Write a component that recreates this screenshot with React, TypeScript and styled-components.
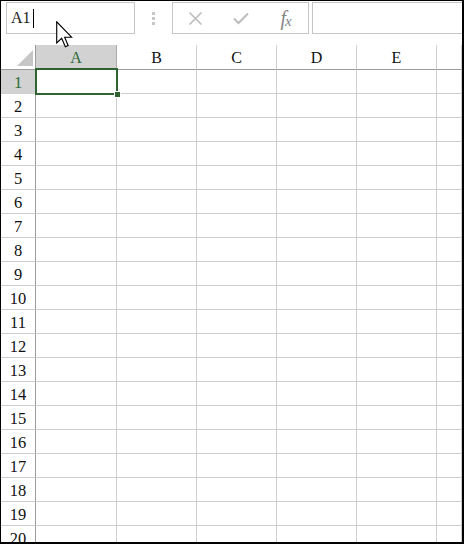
import React from "react";
import styled, { createGlobalStyle } from "styled-components";

const Global = createGlobalStyle`
  html, body { margin: 0; padding: 0; background: #ffffff; }
  body { font-family: "Liberation Serif", "Times New Roman", serif; }
`;

const Frame = styled.div`
  position: relative;
  box-sizing: border-box;
  width: 464px;
  height: 544px;
  border-top: 1px solid #000;
  border-left: 1px solid #000;
  border-right: 2px solid #000;
  border-bottom: 2px solid #000;
  overflow: hidden;
  background: #fff;
  display: flex;
  flex-direction: column;
`;

const FormulaBar = styled.div`
  height: 44px;
  flex: none;
  display: flex;
  align-items: flex-start;
  padding: 1px 0 0 5px;
  box-sizing: border-box;
`;

const NameBox = styled.div`
  box-sizing: border-box;
  width: 129px;
  height: 32px;
  border: 1px solid #c6c6c6;
  display: flex;
  align-items: center;
  padding-left: 4px;
  font-size: 16px;
  color: #222;
`;

const Caret = styled.span`
  display: inline-block;
  width: 1px;
  height: 19px;
  background: #000;
  margin-left: 2px;
`;

const Grip = styled.div`
  width: 37px;
  height: 32px;
  display: flex;
  flex-direction: column;
  align-items: center;
  justify-content: center;
  gap: 2px;
`;

const GripDot = styled.span`
  width: 3px;
  height: 3px;
  background: #c8c8c8;
`;

const IconBox = styled.div`
  box-sizing: border-box;
  width: 137px;
  height: 32px;
  border: 1px solid #c6c6c6;
  display: flex;
  align-items: center;
`;

const IconSlot = styled.div`
  width: 45px;
  height: 30px;
  display: flex;
  align-items: center;
  justify-content: center;
`;

const Fx = styled.span`
  font-family: "Liberation Serif", "Times New Roman", serif;
  font-style: italic;
  font-size: 20px;
  color: #858585;
  letter-spacing: -1px;
  & > small {
    font-size: 15px;
    position: relative;
    top: 1px;
  }
`;

const FormulaInput = styled.div`
  box-sizing: border-box;
  flex: 1;
  height: 32px;
  margin-left: 3px;
  margin-right: -3px;
  border: 1px solid #c6c6c6;
`;

const Sheet = styled.div`
  display: grid;
  grid-template-columns: 35px 81px 80px 80px 80px 80px 1fr;
  grid-auto-rows: 24px;
  grid-template-rows: 25px;
  font-size: 16px;
`;

const Corner = styled.div`
  box-sizing: border-box;
  border-right: 1px solid #9c9c9c;
  border-bottom: 1px solid #9c9c9c;
  position: relative;
`;

const CornerTri = styled.span`
  position: absolute;
  right: 2px;
  bottom: 3px;
  width: 0;
  height: 0;
  border-left: 16px solid transparent;
  border-bottom: 16px solid #c6c6c6;
`;

const ColHeader = styled.div<{ $sel?: boolean }>`
  box-sizing: border-box;
  border-right: 1px solid ${(p) => (p.$sel ? "#aaaaaa" : "#cfcfcf")};
  border-bottom: 1px solid #9c9c9c;
  background: ${(p) => (p.$sel ? "#d2d2d2" : "#ffffff")};
  color: ${(p) => (p.$sel ? "#2e6b35" : "#111")};
  display: flex;
  align-items: center;
  justify-content: center;
  padding-top: 2px;
`;

const RowHeader = styled.div<{ $sel?: boolean }>`
  box-sizing: border-box;
  border-right: 1px solid #9c9c9c;
  border-bottom: 1px solid #cfcfcf;
  background: ${(p) => (p.$sel ? "#d2d2d2" : "#ffffff")};
  color: ${(p) => (p.$sel ? "#2e6b35" : "#111")};
  display: flex;
  align-items: center;
  justify-content: center;
  padding-top: 2px;
  font-size: 16.5px;
`;

const Cell = styled.div`
  box-sizing: border-box;
  border-right: 1px solid #cfcfcf;
  border-bottom: 1px solid #cfcfcf;
  position: relative;
`;

const Selection = styled.div`
  position: absolute;
  left: -1px;
  top: -2px;
  width: 83px;
  height: 27px;
  box-sizing: border-box;
  border: 2px solid #2f6331;
  z-index: 2;
`;

const FillHandle = styled.span`
  position: absolute;
  right: -5px;
  bottom: -5px;
  width: 5px;
  height: 5px;
  background: #2f6331;
  border: 1px solid #fff;
`;

const Pointer = styled.svg`
  position: absolute;
  left: 55px;
  top: 20px;
  z-index: 5;
`;

const cols = ["A", "B", "C", "D", "E", ""];
const rows = Array.from({ length: 20 }, (_, i) => i + 1);

export default function App() {
  return (
    <>
      <Global />
      <Frame>
        <FormulaBar>
          <NameBox>
            A1
            <Caret />
          </NameBox>
          <Grip>
            <GripDot />
            <GripDot />
            <GripDot />
          </Grip>
          <IconBox>
            <IconSlot>
              <svg width="15" height="15" viewBox="0 0 15 15">
                <path d="M1.5 1.5 L13.5 13.5 M13.5 1.5 L1.5 13.5" stroke="#bcbcbc" strokeWidth="1.6" fill="none" />
              </svg>
            </IconSlot>
            <IconSlot>
              <svg width="16" height="13" viewBox="0 0 16 13">
                <path d="M1 6.5 L5.5 11 L15 1.5" stroke="#bcbcbc" strokeWidth="2" fill="none" />
              </svg>
            </IconSlot>
            <IconSlot>
              <Fx>
                f<small>x</small>
              </Fx>
            </IconSlot>
          </IconBox>
          <FormulaInput />
        </FormulaBar>
        <Sheet>
          <Corner>
            <CornerTri />
          </Corner>
          {cols.map((c, i) => (
            <ColHeader key={"h" + i} $sel={c === "A"}>
              {c}
            </ColHeader>
          ))}
          {rows.map((r) => (
            <React.Fragment key={r}>
              <RowHeader $sel={r === 1}>{r}</RowHeader>
              {cols.map((c, i) => (
                <Cell key={c + i}>
                  {r === 1 && i === 0 && (
                    <Selection>
                      <FillHandle />
                    </Selection>
                  )}
                </Cell>
              ))}
            </React.Fragment>
          ))}
        </Sheet>
        <Pointer width="17" height="27" viewBox="0 0 12 19">
          <path
            d="M0.5 0.5 L0.5 15.5 L4 12.2 L6.6 18.2 L8.6 17.3 L6.1 11.4 L11 11.4 Z"
            fill="#fff"
            stroke="#000"
            strokeWidth="0.8"
            strokeLinejoin="miter"
          />
        </Pointer>
      </Frame>
    </>
  );
}
